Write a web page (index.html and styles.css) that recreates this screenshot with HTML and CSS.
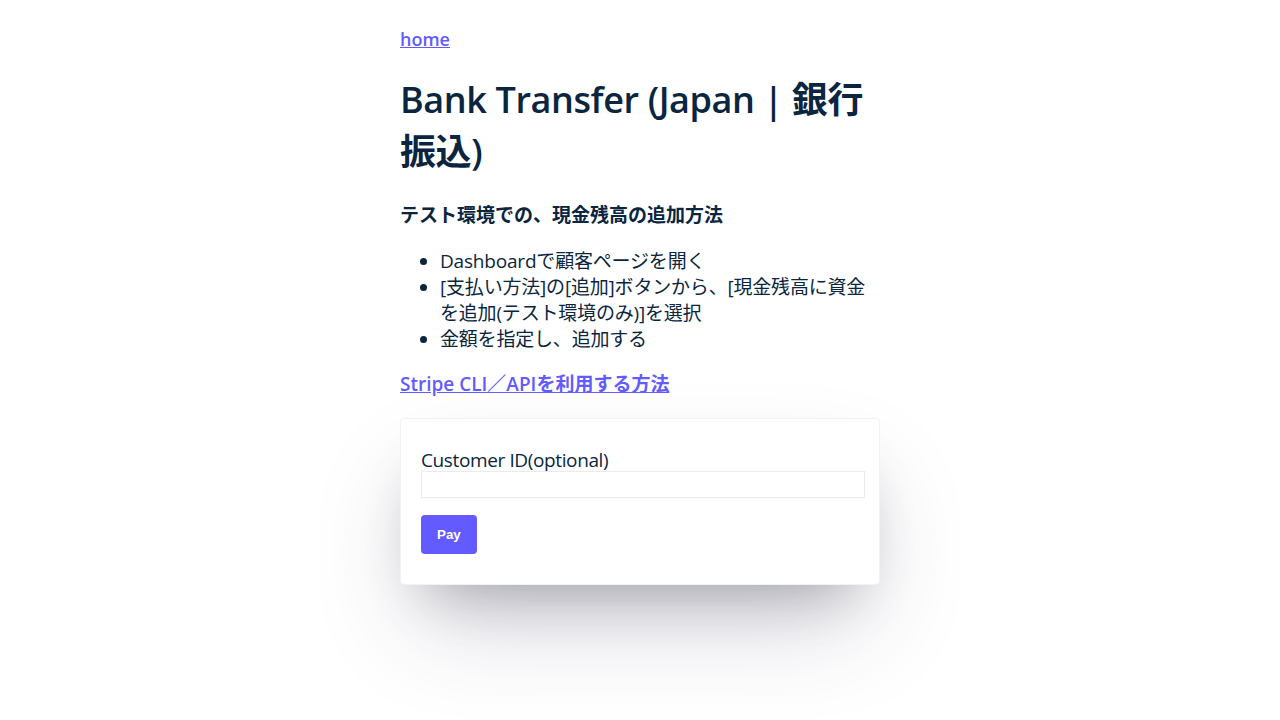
FILE: index.html
```html
<!DOCTYPE html>
<html lang="ja">
<head>
<meta charset="utf-8">
<title>Bank Transfer (Japan | 銀行振込)</title>
<link rel="stylesheet" href="styles.css">
</head>
<body>
<main class="page">
  <a class="link home" href="#">home</a>
  <h1 class="title">Bank Transfer (Japan | 銀行振込)</h1>
  <h3 class="subtitle">テスト環境での、現金残高の追加方法</h3>
  <ul class="steps">
    <li>Dashboardで顧客ページを開く</li>
    <li>[支払い方法]の[追加]ボタンから、[現金残高に資金を追加(テスト環境のみ)]を選択</li>
    <li>金額を指定し、追加する</li>
  </ul>
  <p class="more"><a class="link" href="#">Stripe CLI／APIを利用する方法</a></p>
  <form class="card">
    <label class="field-label" for="customer">Customer ID(optional)</label>
    <input class="field-input" id="customer" type="text">
    <button class="pay" type="button">Pay</button>
  </form>
</main>
</body>
</html>
```
FILE: styles.css
```css
html, body {
  margin: 0;
  padding: 0;
  background: #ffffff;
}

body {
  min-height: 100vh;
  font-family: "Open Sans", "Noto Sans CJK JP", sans-serif;
  color: #0a2540;
  font-size: 19px;
  line-height: 26px;
}

.page {
  width: 480px;
  margin: 0 auto;
  padding: 28px 0 140px;
}

.link {
  color: #635bff;
  text-decoration: underline;
  font-weight: 600;
}

.home {
  display: block;
  width: max-content;
  font-size: 18px;
  line-height: 22px;
}

.title {
  font-size: 36px;
  line-height: 52px;
  font-weight: 600;
  letter-spacing: -0.4px;
  margin: 24px 0 24px;
}

.subtitle {
  font-size: 19px;
  line-height: 27px;
  font-weight: 700;
  margin: 0 0 19px;
}

.steps {
  margin: 0 0 19px;
  padding-left: 40px;
}

.steps li {
  letter-spacing: -0.01em;
}

.more {
  margin: 0 0 21px;
}

.card {
  display: flex;
  flex-direction: column;
  align-items: flex-start;
  padding: 30px 20px;
  border: 1px solid #f2f2f4;
  border-radius: 4px;
  background: #ffffff;
  box-shadow: 0 50px 100px -20px rgba(50, 50, 93, 0.25), 0 30px 60px -30px rgba(0, 0, 0, 0.3);
}

.field-label {
  display: block;
  line-height: 22px;
  letter-spacing: -0.02em;
}

.field-input {
  width: 100%;
  height: 21px;
  padding: 2px;
  border: 1px solid #e9ebee;
  border-radius: 0;
  font: inherit;
  margin: 0;
  outline: none;
}

.pay {
  margin-top: 17px;
  padding: 12px 16px;
  border: 0;
  border-radius: 4px;
  background: #635bff;
  color: #ffffff;
  font-family: "Liberation Sans", Arial, sans-serif;
  font-size: 13.33px;
  font-weight: 700;
  line-height: 15px;
}
```
